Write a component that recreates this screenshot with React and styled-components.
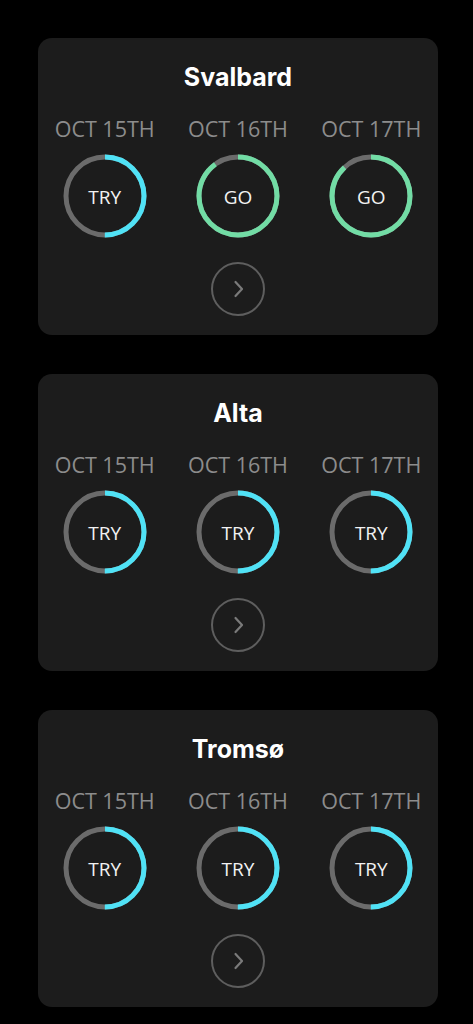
import React from 'react';
import styled, { createGlobalStyle } from 'styled-components';

const GlobalStyle = createGlobalStyle`
  html, body {
    margin: 0;
    padding: 0;
    background: #000;
  }
  body {
    font-family: 'Open Sans', 'Liberation Sans', sans-serif;
  }
`;

const places = [
  {
    name: 'Svalbard',
    days: [
      { date: 'OCT 15TH', label: 'TRY', value: 0.5, color: '#50e2f6' },
      { date: 'OCT 16TH', label: 'GO', value: 0.9, color: '#72dca5' },
      { date: 'OCT 17TH', label: 'GO', value: 0.88, color: '#72dca5' },
    ],
  },
  {
    name: 'Alta',
    days: [
      { date: 'OCT 15TH', label: 'TRY', value: 0.5, color: '#50e2f6' },
      { date: 'OCT 16TH', label: 'TRY', value: 0.5, color: '#50e2f6' },
      { date: 'OCT 17TH', label: 'TRY', value: 0.5, color: '#50e2f6' },
    ],
  },
  {
    name: 'Tromsø',
    days: [
      { date: 'OCT 15TH', label: 'TRY', value: 0.5, color: '#50e2f6' },
      { date: 'OCT 16TH', label: 'TRY', value: 0.5, color: '#50e2f6' },
      { date: 'OCT 17TH', label: 'TRY', value: 0.5, color: '#50e2f6' },
    ],
  },
];

const Ring = ({ value, color, label }) => {
  const r = 39;
  const c = 2 * Math.PI * r;
  return (
    <RingWrap>
      <svg width="86" height="86" viewBox="0 0 86 86">
        <circle cx="43" cy="43" r={r} fill="none" stroke="#6b6b6b" strokeWidth="5" />
        <circle
          cx="43"
          cy="43"
          r={r}
          fill="none"
          stroke={color}
          strokeWidth="5"
          strokeDasharray={`${c * value} ${c}`}
          transform="rotate(-90 43 43)"
        />
      </svg>
      <RingLabel>{label}</RingLabel>
    </RingWrap>
  );
};

const App = () => {
  return (
    <>
      <GlobalStyle />
      <Page>
        {places.map((p) => (
          <Card key={p.name}>
            <Title>{p.name}</Title>
            <Days>
              {p.days.map((d) => (
                <Day key={d.date}>
                  <DateText>{d.date}</DateText>
                  <Ring value={d.value} color={d.color} label={d.label} />
                </Day>
              ))}
            </Days>
            <NextButton>
              <svg width="14" height="20" viewBox="0 0 14 20">
                <path d="M4.5 3 L11 10 L4.5 17" fill="none" stroke="#7a7a7a" strokeWidth="2.2" strokeLinecap="round" strokeLinejoin="round" />
              </svg>
            </NextButton>
          </Card>
        ))}
      </Page>
    </>
  );
};

export default App;

const Page = styled.div`
  display: flex;
  flex-direction: column;
  gap: 39px;
  padding: 38px 0 19px 38px;
`;

const Card = styled.div`
  width: 400px;
  box-sizing: border-box;
  background: #1c1c1c;
  border-radius: 14px;
  padding: 26px 0 19px;
  display: flex;
  flex-direction: column;
  align-items: center;
`;

const Title = styled.div`
  font-family: 'Inter', 'Open Sans', sans-serif;
  font-weight: 700;
  font-size: 25px;
  line-height: 26px;
  color: #fff;
`;

const Days = styled.div`
  display: grid;
  grid-template-columns: repeat(3, 1fr);
  width: 100%;
  margin-top: 28px;
`;

const Day = styled.div`
  display: flex;
  flex-direction: column;
  align-items: center;
  gap: 13px;
`;

const DateText = styled.div`
  font-family: 'Open Sans', sans-serif;
  font-size: 21.5px;
  line-height: 22px;
  color: #8c8c8c;
  white-space: nowrap;
`;

const RingWrap = styled.div`
  position: relative;
  width: 86px;
  height: 86px;

  svg {
    display: block;
  }
`;

const RingLabel = styled.div`
  position: absolute;
  inset: 0;
  display: flex;
  align-items: center;
  justify-content: center;
  padding-top: 2px;
  font-family: 'Open Sans', sans-serif;
  font-size: 19px;
  color: #f2f2f2;
`;

const NextButton = styled.div`
  margin-top: 23px;
  width: 50px;
  height: 50px;
  border: 2px solid #5e5e5e;
  border-radius: 50%;
  display: flex;
  align-items: center;
  justify-content: center;
`;
